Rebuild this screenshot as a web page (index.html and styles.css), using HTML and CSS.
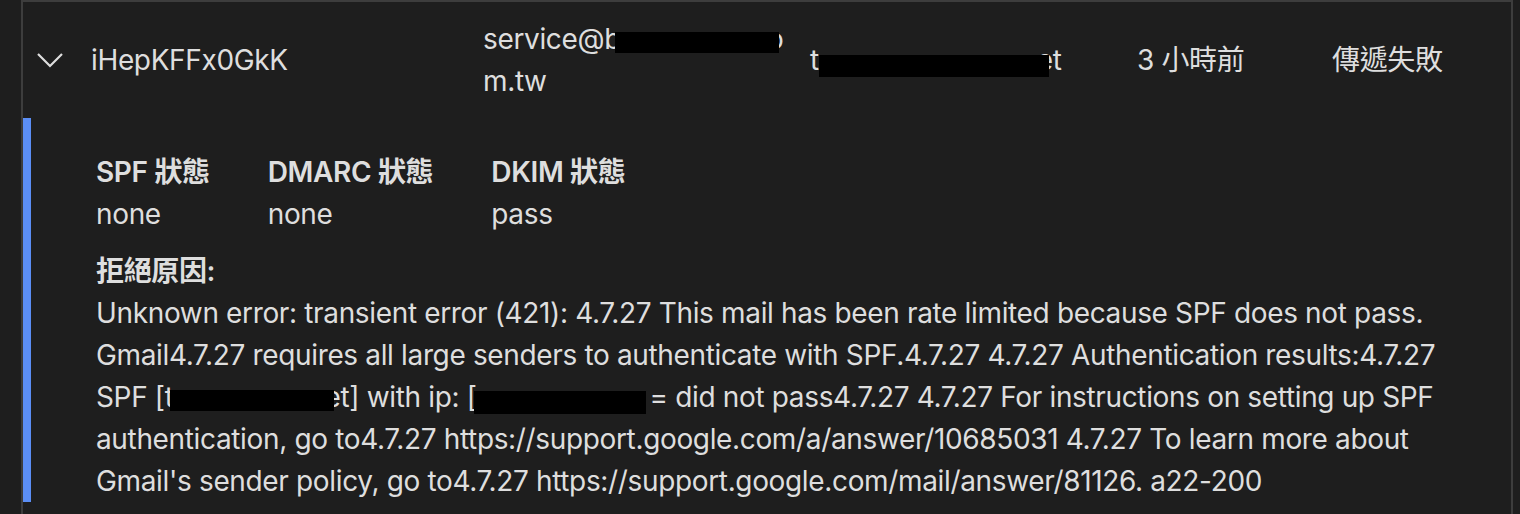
FILE: index.html
```html
<!DOCTYPE html>
<html lang="zh-Hant">
<head>
<meta charset="utf-8">
<link rel="stylesheet" href="styles.css">
</head>
<body>
<div class="card">
  <div class="row">
    <div class="cell cell-toggle">
      <svg class="chevron" width="28" height="16" viewBox="0 0 28 16"><path d="M2 2 L14 14 L26 2" fill="none" stroke="#dedede" stroke-width="2.2"/></svg>
    </div>
    <div class="cell">iHepKFFx0GkK</div>
    <div class="cell cell-from">service@b<span class="redact r-from"></span>o<br>m.tw</div>
    <div class="cell">t<span class="redact r-to"></span>et</div>
    <div class="cell">3 小時前</div>
    <div class="cell">傳遞失敗</div>
  </div>
  <div class="detail">
    <div class="auth">
      <div class="auth-item">
        <div class="label">SPF 狀態</div>
        <div class="value">none</div>
      </div>
      <div class="auth-item">
        <div class="label">DMARC 狀態</div>
        <div class="value">none</div>
      </div>
      <div class="auth-item">
        <div class="label">DKIM 狀態</div>
        <div class="value">pass</div>
      </div>
    </div>
    <div class="reason">
      <div class="label">拒絕原因:</div>
      <p class="reason-text">Unknown error: transient error (421): 4.7.27 This mail has been rate limited because SPF does not pass. Gmail4.7.27 requires all large senders to authenticate with SPF.4.7.27 4.7.27 Authentication results:4.7.27 SPF [t<span class="redact r-dom"></span>et] with ip: [<span class="redact r-ip"></span>= did not pass4.7.27 4.7.27 For instructions on setting up SPF authentication, go to4.7.27 https://support.google.com/a/answer/10685031 4.7.27 To learn more about Gmail's sender policy, go to4.7.27 https://support.google.com/mail/answer/81126. a22-200</p>
    </div>
  </div>
</div>
</body>
</html>
```

FILE: styles.css
```css
html, body {
  margin: 0;
  padding: 0;
  background: #1e1e1e;
  height: 100%;
  overflow: hidden;
}
body {
  font-family: "Inter", "Noto Sans CJK TC", sans-serif;
  font-size: 28px;
  letter-spacing: -0.35px;
  color: #dedede;
  line-height: 42px;
}
.card {
  margin-left: 21px;
  width: 1488px;
  border: 2px solid #3d3d3d;
  border-bottom: none;
  height: 600px;
}
.row {
  display: grid;
  grid-template-columns: 68px 392px 327px 327px 195px 1fr;
  align-items: center;
  height: 116px;
}
.cell-toggle {
  display: flex;
  align-items: center;
  padding-left: 13px;
}
.chevron {
  display: block;
}
.redact {
  position: relative;
  display: inline-block;
  background: #000;
  height: 21px;
  vertical-align: -4px;
}
.r-from { width: 164px; margin-left: -6px; margin-right: -12px; }
.r-to { width: 230px; margin-left: 0; margin-right: -12px; vertical-align: -7px; height: 22px; }
.r-dom { width: 164px; margin-left: -4px; margin-right: -9px; }
.r-ip { width: 172px; margin-left: -3px; margin-right: 4px; vertical-align: -7px; height: 23px; }
.detail {
  border-left: 8px solid #5b8ef5;
  padding: 33px 65px 0 65px;
}
.auth {
  display: flex;
  gap: 58px;
}
.label {
  font-weight: 600;
}
.reason {
  margin-top: 15px;
}
.reason-text {
  margin: 0;
}
```
